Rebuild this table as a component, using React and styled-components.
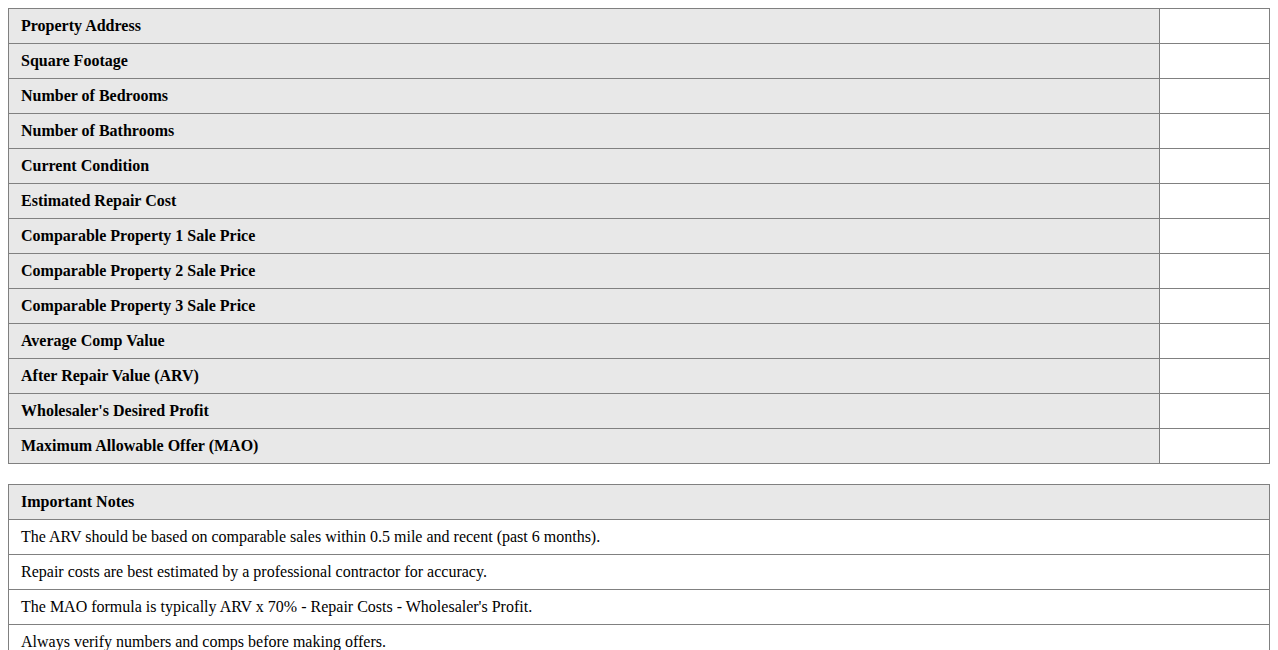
import React from 'react';
import styled, { createGlobalStyle } from 'styled-components';

const GlobalStyle = createGlobalStyle`
    body {
        margin: 8px;
        font-family: "Liberation Serif", "Times New Roman", serif;
        font-size: 16px;
        color: #000;
        background: #fff;
    }
`

const Table = styled.table`
    width: 100%;
    border-collapse: collapse;
    margin-bottom: 20px;
`

const Label = styled.th`
    background-color: #e8e8e8;
    border: 1px solid #808080;
    padding: 8px 12px;
    text-align: left;
    font-weight: bold;
    line-height: 18px;
`

const Value = styled.td`
    border: 1px solid #808080;
    padding: 8px 12px;
    width: 85px;
    line-height: 18px;
`

const Note = styled.td`
    border: 1px solid #808080;
    padding: 8px 12px;
    line-height: 18px;
`

const fields = [
    'Property Address',
    'Square Footage',
    'Number of Bedrooms',
    'Number of Bathrooms',
    'Current Condition',
    'Estimated Repair Cost',
    'Comparable Property 1 Sale Price',
    'Comparable Property 2 Sale Price',
    'Comparable Property 3 Sale Price',
    'Average Comp Value',
    'After Repair Value (ARV)',
    "Wholesaler's Desired Profit",
    'Maximum Allowable Offer (MAO)',
];

const notes = [
    'The ARV should be based on comparable sales within 0.5 mile and recent (past 6 months).',
    'Repair costs are best estimated by a professional contractor for accuracy.',
    "The MAO formula is typically ARV x 70% - Repair Costs - Wholesaler's Profit.",
    'Always verify numbers and comps before making offers.',
];

export default function App() {
    return (
        <>
            <GlobalStyle />
            <Table>
                <tbody>
                    {fields.map((field) => (
                        <tr key={field}>
                            <Label>{field}</Label>
                            <Value></Value>
                        </tr>
                    ))}
                </tbody>
            </Table>
            <Table>
                <tbody>
                    <tr>
                        <Label>Important Notes</Label>
                    </tr>
                    {notes.map((note) => (
                        <tr key={note}>
                            <Note>{note}</Note>
                        </tr>
                    ))}
                </tbody>
            </Table>
        </>
    );
}
